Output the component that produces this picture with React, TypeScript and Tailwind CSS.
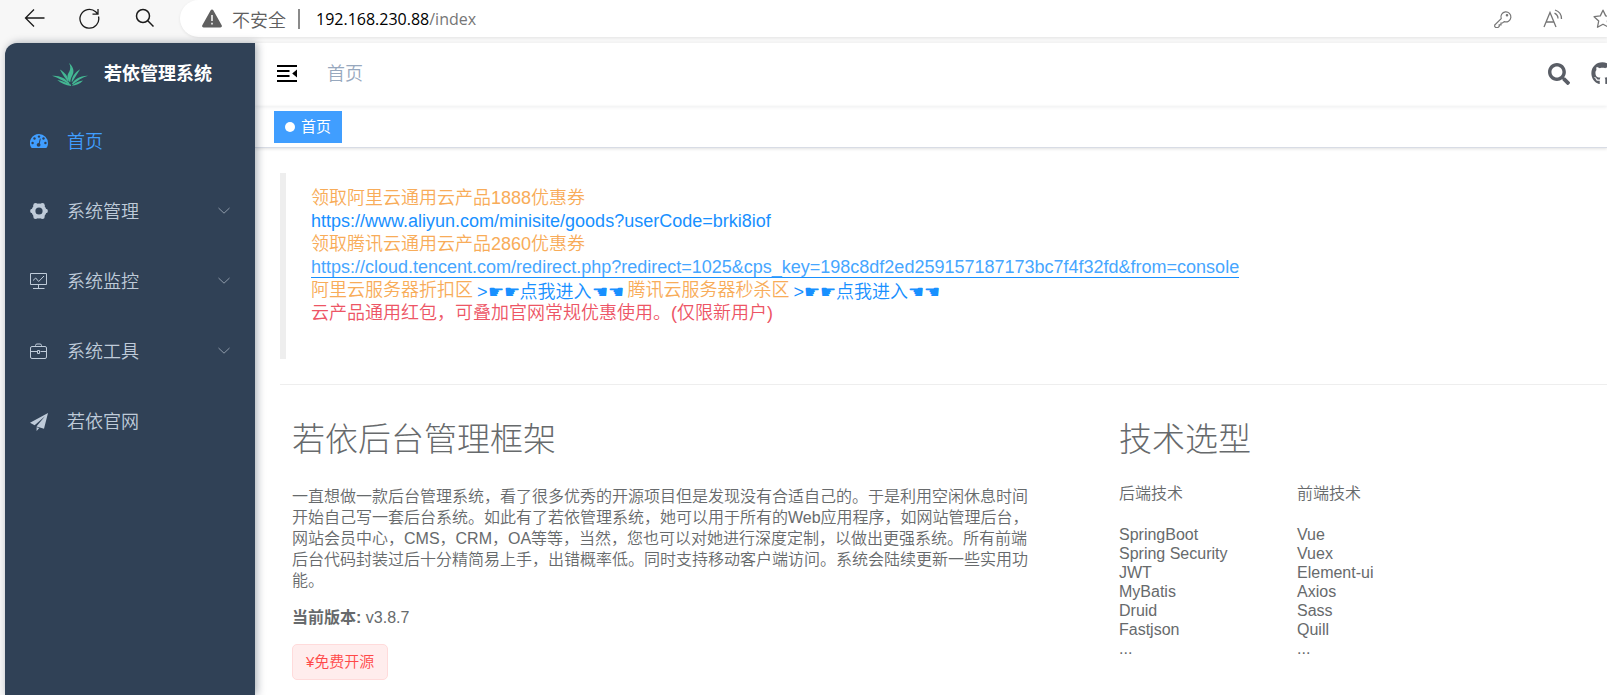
import type { ReactNode } from 'react';
import { FaGithub, FaSearch } from 'react-icons/fa';

const SANS = "font-['Liberation_Sans','Noto_Sans_CJK_SC',sans-serif]";

function Logo() {
  return (
    <svg viewBox="0 0 110 70" className="h-[23px] w-9 shrink-0" fill="#44b793" aria-hidden="true">
      <path d="M54 58C46 47 45 38 53 26C57 18 57 10 52 0C66 12 69 26 62 38C58 46 56 52 56 58Z" />
      <path d="M49 57C39 46 32 34 24 20C38 28 48 40 51 55Z" />
      <path d="M51 65C36 55 20 46 0 39C22 37 40 46 54 62Z" />
      <path d="M58 70C42 68 28 62 16 52C32 55 44 60 58 66Z" />
      <path d="M60 57C61 42 70 28 86 19C78 32 70 44 62 57Z" />
      <path d="M61 64C68 50 86 38 110 39C92 44 78 54 64 65Z" />
      <path d="M60 69C68 61 80 55 95 53C85 63 74 68 60 69Z" />
    </svg>
  );
}

function DashboardIcon() {
  return (
    <svg viewBox="0 0 18 18" className="size-[18px]" aria-hidden="true">
      <path fill="currentColor" d="M9 1a9 9 0 0 1 9 9c0 1.800-.4 3.200-1.200 4.600-.2.300-.4.400-.8.400H2c-.4 0-.6-.1-.8-.4A9 9 0 0 1 9 1Z" />
      <g fill="#304156">
        <circle cx="2.600" cy="10" r="1.200" />
        <circle cx="4.500" cy="5.500" r="1.200" />
        <circle cx="9" cy="3.600" r="1.200" />
        <circle cx="13.500" cy="5.500" r="1.200" />
        <circle cx="15.400" cy="10" r="1.200" />
        <circle cx="8.600" cy="11.800" r="1.900" />
        <path d="m9.900 5.600.9.200-1.400 6h-1.100Z" />
      </g>
    </svg>
  );
}

function GearIcon() {
  return (
    <svg viewBox="0 1 18 18" className="size-[18px]" fill="currentColor" aria-hidden="true">
      <circle cx="9" cy="9" r="5.500" fill="none" stroke="currentColor" strokeWidth="3.800" />
      <circle cx="2.400" cy="9" r="2.300" />
      <circle cx="15.600" cy="9" r="2.300" />
      <circle cx="5.600" cy="3.300" r="2.300" />
      <circle cx="12.400" cy="3.300" r="2.300" />
      <circle cx="5.600" cy="14.700" r="2.300" />
      <circle cx="12.400" cy="14.700" r="2.300" />
    </svg>
  );
}

function MonitorIcon() {
  return (
    <svg viewBox="0 1 18 18" className="size-[18px]" fill="none" stroke="currentColor" aria-hidden="true">
      <path d="M.5 1.500h16v11H.5zM8.500 12.500v4M3 16.500h11.500" />
      <path d="m3 8.500 2.700-2.500 3 3.500L14 4" />
    </svg>
  );
}

function ToolIcon() {
  return (
    <svg viewBox="0 1 18 18" className="size-[18px]" fill="none" stroke="currentColor" aria-hidden="true">
      <rect x=".5" y="4.500" width="16" height="12" rx="1.500" />
      <path d="M5.500 4.500v-1q0-1.500 1.500-1.500h3q1.500 0 1.500 1.500v1M.5 9.500H7m3.500 0h6M7.500 8.500h2v3h-2z" />
    </svg>
  );
}

function PlaneIcon() {
  return (
    <svg viewBox="0 0 18 18" className="size-[18px]" fill="currentColor" aria-hidden="true">
      <path d="M18 0 0 9.800l4.600 2.500L15 3.300 6.600 13.200v.2l7.400 2.300ZM6.600 14.200V18l2.700-3Z" />
    </svg>
  );
}

function Chevron() {
  return (
    <svg viewBox="0 0 12 12" className="size-3" fill="none" stroke="#8e9aa9" aria-hidden="true">
      <path d="m.5 2 5.500 5.200L11.500 2" />
    </svg>
  );
}

const menu: { label: string; icon: ReactNode; sub?: boolean; active?: boolean }[] = [
  { label: '首页', icon: <DashboardIcon />, active: true },
  { label: '系统管理', icon: <GearIcon />, sub: true },
  { label: '系统监控', icon: <MonitorIcon />, sub: true },
  { label: '系统工具', icon: <ToolIcon />, sub: true },
  { label: '若依官网', icon: <PlaneIcon /> },
];

function BrowserBar() {
  return (
    <header className="flex h-[42px] items-start">
      <div className="flex h-9 w-[180px] shrink-0 items-center gap-[34px] pl-6 text-[#1b1b1b]">
        <button type="button" aria-label="后退">
          <svg viewBox="0 0 21 20" className="h-5 w-[21px]" fill="none" stroke="currentColor" strokeWidth="1.300">
            <path d="M20.500 10H1.500M10 1.500 1.500 10l8.500 8.500" />
          </svg>
        </button>
        <button type="button" aria-label="刷新">
          <svg viewBox="0 0 21 21" className="size-[21px]" fill="none" stroke="currentColor" strokeWidth="1.300">
            <path d="M19.500 8.500a9.400 9.400 0 1 1-2.800-4.700l1.800 1.900M19 1v5.200h-5.500" />
          </svg>
        </button>
        <button type="button" aria-label="搜索">
          <svg viewBox="0 0 20 20" className="size-5" fill="none" stroke="currentColor" strokeWidth="1.500">
            <circle cx="9" cy="8" r="6.500" />
            <path d="m13.800 12.800 5.700 5.700" />
          </svg>
        </button>
      </div>
      <div className="flex h-[37px] min-w-0 flex-1 items-center overflow-hidden rounded-l-full bg-white pl-[22px] shadow-[0_1px_3px_rgba(0,0,0,0.08)]">
        <svg viewBox="0 0 20 18" className="h-[19px] w-5 shrink-0" aria-hidden="true">
          <path fill="#606060" d="M10 0c.6 0 1 .3 1.300.8l8.400 15c.6 1-.1 2.200-1.300 2.200H1.600C.4 18-.3 16.800.3 15.800L8.700.8C9 .3 9.400 0 10 0Z" />
          <path stroke="#fff" strokeWidth="1.500" d="M10 5.500v6M10 13.300v1.700" />
        </svg>
        <span className="ml-2.5 font-['Noto_Sans_CJK_SC',sans-serif] text-lg leading-5 font-[350] whitespace-nowrap text-[#606060]">不安全</span>
        <span className="mr-4 ml-3 h-5 w-0.5 shrink-0 bg-[#8a8a8a]" />
        <span className="font-['Open_Sans','Noto_Sans',sans-serif] text-base leading-6 whitespace-nowrap text-[#767676]">
          <span className="text-black">192.168.230.88</span>/index
        </span>
        <div className="-mr-[6px] ml-auto flex shrink-0 items-center gap-[30px] text-[#767676]">
          <svg viewBox="0 0 20 20" className="size-5" fill="none" stroke="currentColor" strokeWidth="1.200">
            <path d="M8.200 9.600a5 5 0 1 1 3 3L9.500 14H8v1.800H6.200V17.500L5 18.500H2.600L1.700 17.600V16Z" />
            <circle cx="14" cy="6.300" r=".7" fill="currentColor" />
          </svg>
          <svg viewBox="0 0 20 20" className="size-5" fill="none" stroke="currentColor" strokeWidth="1.300">
            <path d="M1 18 7 3.500 13 18M3 13h8M11.500 4.200Q15 6 15 9.500M12 1q6.500 2 6.500 9" />
          </svg>
          <svg viewBox="0 0 20 20" className="size-5" fill="none" stroke="currentColor" strokeWidth="1.300" strokeLinejoin="round">
            <path d="m10 1.200 2.700 5.700 6.200.8-4.600 4.300 1.200 6.200L10 15.200l-5.500 3 1.200-6.200L1.100 7.700l6.200-.8Z" />
          </svg>
        </div>
      </div>
    </header>
  );
}

function Sidebar() {
  return (
    <aside className="z-10 w-[250px] shrink-0 rounded-tl-xl bg-[#304156] shadow-[2px_0_8px_rgba(0,21,41,0.35)]">
      <a href="#" className="flex h-[62px] items-center justify-center gap-4 pl-1 text-white">
        <Logo />
        <h1 className="text-lg leading-6 font-bold whitespace-nowrap">若依管理系统</h1>
      </a>
      <nav className="pt-0.5">
        <ul>
          {menu.map((m) => (
            <li key={m.label}>
              <a href="#" className={`flex h-[70px] items-center px-[25px] ${m.active ? 'text-[#409eff]' : 'text-[#bfcbd9]'}`}>
                {m.icon}
                <span className="ml-[19px] flex-1 text-lg leading-6 font-[350]">{m.label}</span>
                {m.sub && <Chevron />}
              </a>
            </li>
          ))}
        </ul>
      </nav>
    </aside>
  );
}

function Navbar() {
  return (
    <div className="flex h-[63px] items-center pb-0.5 pl-[22px] shadow-[0_1px_4px_rgba(0,21,41,0.08)]">
      <button type="button" aria-label="收起菜单">
        <svg viewBox="0 1 20 18" className="h-[18px] w-5" fill="#000">
          <path d="M0 1h20v2H0zM0 6h12.500v2H0zM0 11h12.500v2H0zM0 16h20v2H0zM20 5.500v8l-4.800-4Z" />
        </svg>
      </button>
      <span className="ml-[30px] text-lg leading-6 font-[350] text-[#97a8be]">首页</span>
      <div className="-mr-[7px] ml-auto flex items-center gap-[21px] text-[#5a5e66]">
        <button type="button" aria-label="搜索"><FaSearch className="size-[22px]" /></button>
        <a href="#" aria-label="GitHub"><FaGithub className="size-[23px]" /></a>
      </div>
    </div>
  );
}

function TechList({ title, items }: { title: string; items: string[] }) {
  return (
    <div>
      <h4 className="leading-[21px]">{title}</h4>
      <ul className="mt-[21px] leading-[19px] font-normal">
        {items.map((t) => (
          <li key={t}>{t}</li>
        ))}
      </ul>
    </div>
  );
}

export default function App() {
  return (
    <div className={`flex min-h-screen flex-col overflow-hidden bg-[#f7f7f7] ${SANS}`}>
      <BrowserBar />
      <div className="flex flex-1 pt-px pl-[5px]">
        <Sidebar />
        <div className="flex min-w-0 flex-1 flex-col bg-white">
          <Navbar />
          <div className="flex h-[42px] items-center border-b border-[#d8dce5] pl-[19px] shadow-[0_1px_3px_0_rgba(0,0,0,0.12)]">
            <a href="#" className="flex h-8 items-center gap-1.5 bg-[#409eff] px-[11px] text-[15px] leading-5 text-white">
              <span className="size-2.5 rounded-full bg-white" />
              首页
            </a>
          </div>
          <main className="pt-[25px] pl-[25px] text-base font-[350] text-[#676a6c]">
            <blockquote className="border-l-6 border-[#eee] pt-[14px] pb-[34px] pl-[25px] text-lg leading-[23px]">
              <p className="text-[#f8ac59]">领取阿里云通用云产品1888优惠券</p>
              <p><a href="#" className="text-[#1890ff]">https://www.aliyun.com/minisite/goods?userCode=brki8iof</a></p>
              <p className="text-[#f8ac59]">领取腾讯云通用云产品2860优惠券</p>
              <p>
                <a href="#" className="border-b border-[#1890ff] text-[#46a6ff]">
                  https://cloud.tencent.com/redirect.php?redirect=1025&amp;cps_key=198c8df2ed259157187173bc7f4f32fd&amp;from=console
                </a>
              </p>
              <p className="flex gap-1 text-[#f8ac59]">
                <span>阿里云服务器折扣区</span>
                <a href="#" className="-mb-0.5 pt-0.5 text-[#1890ff]">&gt;☛☛点我进入☚☚</a>
                <span>腾讯云服务器秒杀区</span>
                <a href="#" className="-mb-0.5 pt-0.5 text-[#1890ff]">&gt;☛☛点我进入☚☚</a>
              </p>
              <p className="text-[#ed5565]">云产品通用红包，可叠加官网常规优惠使用。(仅限新用户)</p>
            </blockquote>
            <hr className="mt-[25px] border-[#eee]" />
            <div className="grid grid-cols-[827fr_500fr]">
              <section className="pr-[66px] pl-3">
                <h2 className="mt-[31px] text-[33px] leading-[48px] font-light">若依后台管理框架</h2>
                <p className="mt-[22px] leading-[21px]">
                  一直想做一款后台管理系统，看了很多优秀的开源项目但是发现没有合适自己的。于是利用空闲休息时间开始自己写一套后台系统。如此有了若依管理系统，她可以用于所有的Web应用程序，如网站管理后台，网站会员中心，CMS，CRM，OA等等，当然，您也可以对她进行深度定制，以做出更强系统。所有前端后台代码封装过后十分精简易上手，出错概率低。同时支持移动客户端访问。系统会陆续更新一些实用功能。
                </p>
                <p className="mt-4 leading-[21px] font-normal"><b>当前版本:</b> <span>v3.8.7</span></p>
                <span className="mt-4 inline-flex h-9 items-center rounded-[5px] border border-[#ffdbdb] bg-[#ffeded] px-[13px] text-[15px] leading-5 text-[#ff4949]">¥免费开源</span>
              </section>
              <section className="pl-3">
                <h2 className="mt-[31px] text-[33px] leading-[48px] font-light">技术选型</h2>
                <div className="mt-[19px] grid grid-cols-[178px_1fr]">
                  <TechList title="后端技术" items={['SpringBoot', 'Spring Security', 'JWT', 'MyBatis', 'Druid', 'Fastjson', '...']} />
                  <TechList title="前端技术" items={['Vue', 'Vuex', 'Element-ui', 'Axios', 'Sass', 'Quill', '...']} />
                </div>
              </section>
            </div>
          </main>
        </div>
      </div>
    </div>
  );
}
